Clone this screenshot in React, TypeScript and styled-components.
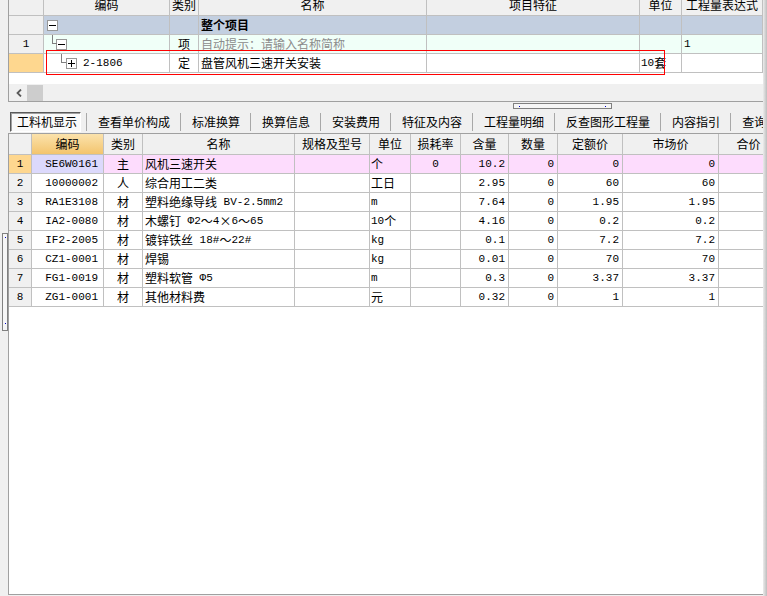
import React from 'react';
import styled, { createGlobalStyle } from 'styled-components';

const CJK = `"Noto Sans CJK SC", "Liberation Sans", sans-serif`;
const MONO = `"Liberation Mono", "Noto Sans CJK SC", monospace`;
const LINE = '#c0c0c0';

const GlobalStyle = createGlobalStyle`
  html, body { margin: 0; padding: 0; background: #f0f0f0; }
  body { font-family: ${CJK}; font-size: 12px; color: #000; }
  * { box-sizing: border-box; }
`;

type Align = 'left' | 'center' | 'right';

const justify = (a?: Align) =>
  a === 'center' ? 'center' : a === 'right' ? 'flex-end' : 'flex-start';

const Page = styled.div`
  display: flex;
  width: 767px;
  height: 596px;
  overflow: hidden;
  background: #f0f0f0;
`;

const Gutter = styled.div`
  width: 8px;
  flex: none;
  padding: 233px 0 0 2px;
`;

const VHandle = styled.div`
  width: 6px;
  height: 98px;
  border: 1px solid #808080;
  background: #f6f6f6;
  display: flex;
  flex-direction: column;
  justify-content: space-between;
  align-items: center;
  padding: 3px 0 6px;
`;

const Dot = styled.span`
  display: block;
  width: 1px;
  height: 1px;
  background: #0000c8;
`;

const Main = styled.div`
  width: 755px;
  flex: none;
  display: flex;
  flex-direction: column;
`;

const RightShade = styled.div`
  flex: 1;
  background: linear-gradient(to right, #ececec, #bdbdbd);
`;

/* ---------- top panel ---------- */

const TopPanel = styled.div`
  position: relative;
  height: 102px;
  border-left: 1px solid #a0a0a0;
  border-bottom: 1px solid #a0a0a0;
  display: flex;
  flex-direction: column;
`;

const TopGrid = styled.div`
  display: grid;
  grid-template-columns: 35px 126px 29px 228px 213px 42px 81px;
  grid-template-rows: 16px;
  grid-auto-rows: 19px;
  align-content: start;
  height: 84px;
  background: #fff;
`;

const Cell = styled.div<{ $align?: Align; $bg?: string; $mono?: boolean; $pad?: number }>`
  position: relative;
  display: flex;
  align-items: center;
  justify-content: ${(p) => justify(p.$align)};
  padding: 0 ${(p) => p.$pad ?? 2}px;
  border-right: 1px solid ${LINE};
  border-bottom: 1px solid ${LINE};
  background: ${(p) => p.$bg ?? '#fff'};
  white-space: pre;
  overflow: hidden;
  font-family: ${(p) => (p.$mono ? MONO : CJK)};
  font-size: ${(p) => (p.$mono ? '11px' : '12px')};
  line-height: 16px;
`;

const CutHead = styled(Cell)`
  align-items: flex-end;
  justify-content: center;
  background: #f0f0f0;
  & > span {
    line-height: 12px;
    margin-bottom: 4px;
  }
`;

const Bold = styled.span`
  font-weight: 700;
`;

const Hint = styled.span`
  color: #8c8c8c;
`;

const Latin = styled.span`
  font-family: ${MONO};
  font-size: 11px;
  white-space: pre;
`;

const Tree = styled.div<{ $indent: number }>`
  display: flex;
  align-items: center;
  gap: 6px;
  height: 100%;
  padding-left: ${(p) => p.$indent}px;
`;

const Elbow = styled.span<{ $left: number }>`
  position: absolute;
  left: ${(p) => p.$left}px;
  top: 0;
  width: 5px;
  height: 9px;
  border-left: 1px solid #808080;
  border-bottom: 1px solid #808080;
`;

const Box = styled.span`
  display: block;
  width: 11px;
  height: 11px;
  border: 1px solid #979797;
  background: #fff;
  flex: none;
  & svg {
    display: block;
  }
`;

const TreeBox = ({ open }: { open: boolean }) => (
  <Box>
    <svg width="9" height="9" viewBox="0 0 9 9" shapeRendering="crispEdges">
      <rect x="1" y="4" width="7" height="1" fill="#000" />
      {!open && <rect x="4" y="1" width="1" height="7" fill="#000" />}
    </svg>
  </Box>
);

const Marker = styled.div`
  position: absolute;
  left: 37px;
  top: 50px;
  width: 619px;
  height: 25px;
  border: 1px solid #f00;
  pointer-events: none;
`;

const HScroll = styled.div`
  height: 17px;
  display: flex;
  align-items: center;
  background: #f0f0f0;
`;

const ArrowBtn = styled.div`
  width: 18px;
  height: 17px;
  display: flex;
  align-items: center;
  justify-content: center;
  padding-left: 2px;
`;

const Thumb = styled.div`
  width: 16px;
  height: 16px;
  background: #cdcdcd;
`;

/* ---------- splitter + tabs ---------- */

const Splitter = styled.div`
  height: 8px;
  padding: 1px 0 0 505px;
`;

const HHandle = styled.div`
  width: 99px;
  height: 6px;
  border: 1px solid #808080;
  background: #f6f6f6;
  display: flex;
  justify-content: space-between;
  align-items: center;
  padding: 0 5px;
`;

const Tabs = styled.div`
  height: 23px;
  display: flex;
  align-items: center;
  padding-left: 2px;
  white-space: nowrap;
  overflow: hidden;
`;

const Tab = styled.div<{ $active?: boolean }>`
  height: 20px;
  flex: none;
  display: flex;
  align-items: center;
  font-size: 12px;
  line-height: 16px;
  padding: ${(p) => (p.$active ? '0 4px 0 6px' : '0 10px 0 11px')};
  ${(p) =>
    p.$active &&
    `
    width: 71px;
    margin-right: 5px;
    border: 1px solid;
    border-color: #5a5a5a #ffffff #ffffff #5a5a5a;
    background: #f9f9f9;
    box-shadow: inset 1px 1px 0 #a0a0a0;
  `}
`;

const Sep = styled.span`
  display: block;
  width: 1px;
  height: 18px;
  background: #a8a8a8;
  flex: none;
`;

/* ---------- bottom panel ---------- */

const BottomPanel = styled.div`
  height: 462px;
  border-left: 1px solid #a0a0a0;
  border-top: 1px solid #a0a0a0;
  border-bottom: 1px solid #a0a0a0;
  background: #fff;
  overflow: hidden;
`;

const BottomGrid = styled.div`
  display: grid;
  grid-template-columns: 23px 72px 39px 152px 75px 41px 50px 48px 49px 65px 96px 60px;
  grid-template-rows: 21px;
  grid-auto-rows: 19px;
  width: 775px;
`;

const Head = styled(Cell)<{ $hot?: boolean }>`
  justify-content: center;
  background: ${(p) =>
    p.$hot ? 'linear-gradient(to bottom, #fbe2ac, #f3c46e)' : '#f0f0f0'};
`;

const ORANGE = '#fed78f';
const ROWNUM = '#f0f0f0';

type Row = {
  code: string;
  kind: string;
  name: React.ReactNode;
  unit: React.ReactNode;
  loss: string;
  qty: string;
  quota: string;
  market: string;
};

const rows: Row[] = [
  { code: 'SE6W0161', kind: '主', name: '风机三速开关', unit: '个', loss: '0', qty: '10.2', quota: '0', market: '0' },
  { code: '10000002', kind: '人', name: '综合用工二类', unit: '工日', loss: '', qty: '2.95', quota: '60', market: '60' },
  {
    code: 'RA1E3108',
    kind: '材',
    name: (<>塑料绝缘导线<Latin> BV-2.5mm2</Latin></>),
    unit: <Latin>m</Latin>,
    loss: '',
    qty: '7.64',
    quota: '1.95',
    market: '1.95',
  },
  {
    code: 'IA2-0080',
    kind: '材',
    name: (<>木螺钉<Latin> Φ2</Latin>～<Latin>4</Latin>×<Latin>6</Latin>～<Latin>65</Latin></>),
    unit: (<><Latin>10</Latin>个</>),
    loss: '',
    qty: '4.16',
    quota: '0.2',
    market: '0.2',
  },
  {
    code: 'IF2-2005',
    kind: '材',
    name: (<>镀锌铁丝<Latin> 18#</Latin>～<Latin>22#</Latin></>),
    unit: <Latin>kg</Latin>,
    loss: '',
    qty: '0.1',
    quota: '7.2',
    market: '7.2',
  },
  { code: 'CZ1-0001', kind: '材', name: '焊锡', unit: <Latin>kg</Latin>, loss: '', qty: '0.01', quota: '70', market: '70' },
  {
    code: 'FG1-0019',
    kind: '材',
    name: (<>塑料软管<Latin> Φ5</Latin></>),
    unit: <Latin>m</Latin>,
    loss: '',
    qty: '0.3',
    quota: '3.37',
    market: '3.37',
  },
  { code: 'ZG1-0001', kind: '材', name: '其他材料费', unit: '元', loss: '', qty: '0.32', quota: '1', market: '1' },
];

const heads = ['', '编码', '类别', '名称', '规格及型号', '单位', '损耗率', '含量', '数量', '定额价', '市场价', '合价'];

const tabs = ['查看单价构成', '标准换算', '换算信息', '安装费用', '特征及内容', '工程量明细', '反查图形工程量', '内容指引', '查询工'];

const App: React.FC = () => {
  const BLUE = '#c3cfe0';
  const MINT = '#f0fff8';
  const PINK = '#fddcfd';
  const LAV = '#dcd9fc';

  return (
    <>
      <GlobalStyle />
      <Page>
        <Gutter>
          <VHandle>
            <Dot />
            <Dot />
          </VHandle>
        </Gutter>
        <Main>
          <TopPanel>
            <TopGrid>
              {['', '编码', '类别', '名称', '项目特征', '单位', '工程量表达式'].map((h, i) => (
                <CutHead key={i}>
                  <span>{h}</span>
                </CutHead>
              ))}

              <Cell $bg={ROWNUM} />
              <Cell $bg={BLUE} $pad={0}>
                <Tree $indent={3}>
                  <TreeBox open />
                </Tree>
              </Cell>
              <Cell $bg={BLUE} />
              <Cell $bg={BLUE}>
                <Bold>整个项目</Bold>
              </Cell>
              <Cell $bg={BLUE} />
              <Cell $bg={BLUE} />
              <Cell $bg={BLUE} />

              <Cell $bg={ROWNUM} $align="center" $mono>1</Cell>
              <Cell $bg={MINT} $pad={0}>
                <Elbow $left={8} />
                <Tree $indent={12}>
                  <TreeBox open />
                </Tree>
              </Cell>
              <Cell $bg={MINT} $align="center">项</Cell>
              <Cell $bg={MINT}>
                <Hint>自动提示：请输入名称简称</Hint>
              </Cell>
              <Cell $bg={MINT} />
              <Cell $bg={MINT} />
              <Cell $bg={MINT} $mono>1</Cell>

              <Cell $bg={ORANGE} />
              <Cell $pad={0}>
                <Elbow $left={17} />
                <Tree $indent={22}>
                  <TreeBox open={false} />
                  <Latin>2-1806</Latin>
                </Tree>
              </Cell>
              <Cell $align="center">定</Cell>
              <Cell>盘管风机三速开关安装</Cell>
              <Cell />
              <Cell $pad={1}>
                <Latin>10</Latin>套
              </Cell>
              <Cell />
            </TopGrid>
            <HScroll>
              <ArrowBtn>
                <svg width="6" height="8" viewBox="0 0 6 8">
                  <path d="M5 0.5 L1.5 4 L5 7.5" fill="none" stroke="#5a5a5a" strokeWidth="1.8" />
                </svg>
              </ArrowBtn>
              <Thumb />
            </HScroll>
            <Marker />
          </TopPanel>

          <Splitter>
            <HHandle>
              <Dot />
              <Dot />
            </HHandle>
          </Splitter>

          <Tabs>
            <Tab $active>工料机显示</Tab>
            {tabs.map((t) => (
              <React.Fragment key={t}>
                <Sep />
                <Tab>{t}</Tab>
              </React.Fragment>
            ))}
          </Tabs>

          <BottomPanel>
            <BottomGrid>
              {heads.map((h, i) => (
                <Head key={i} $hot={i === 1}>
                  {h}
                </Head>
              ))}
              {rows.map((r, i) => {
                const first = i === 0;
                const bg = first ? PINK : '#fff';
                return (
                  <React.Fragment key={r.code}>
                    <Cell $bg={first ? ORANGE : ROWNUM} $align="center" $mono>
                      {i + 1}
                    </Cell>
                    <Cell $bg={first ? LAV : '#fff'} $align="right" $mono $pad={5}>
                      {r.code}
                    </Cell>
                    <Cell $bg={bg} $align="center">{r.kind}</Cell>
                    <Cell $bg={bg}>{r.name}</Cell>
                    <Cell $bg={bg} />
                    <Cell $bg={bg} $pad={1}>{r.unit}</Cell>
                    <Cell $bg={bg} $align="center" $mono>{r.loss}</Cell>
                    <Cell $bg={bg} $align="right" $mono $pad={3}>{r.qty}</Cell>
                    <Cell $bg={bg} $align="right" $mono $pad={3}>0</Cell>
                    <Cell $bg={bg} $align="right" $mono $pad={3}>{r.quota}</Cell>
                    <Cell $bg={bg} $align="right" $mono $pad={3}>{r.market}</Cell>
                    <Cell $bg={bg} />
                  </React.Fragment>
                );
              })}
            </BottomGrid>
          </BottomPanel>
        </Main>
        <RightShade />
      </Page>
    </>
  );
};

export default App;
